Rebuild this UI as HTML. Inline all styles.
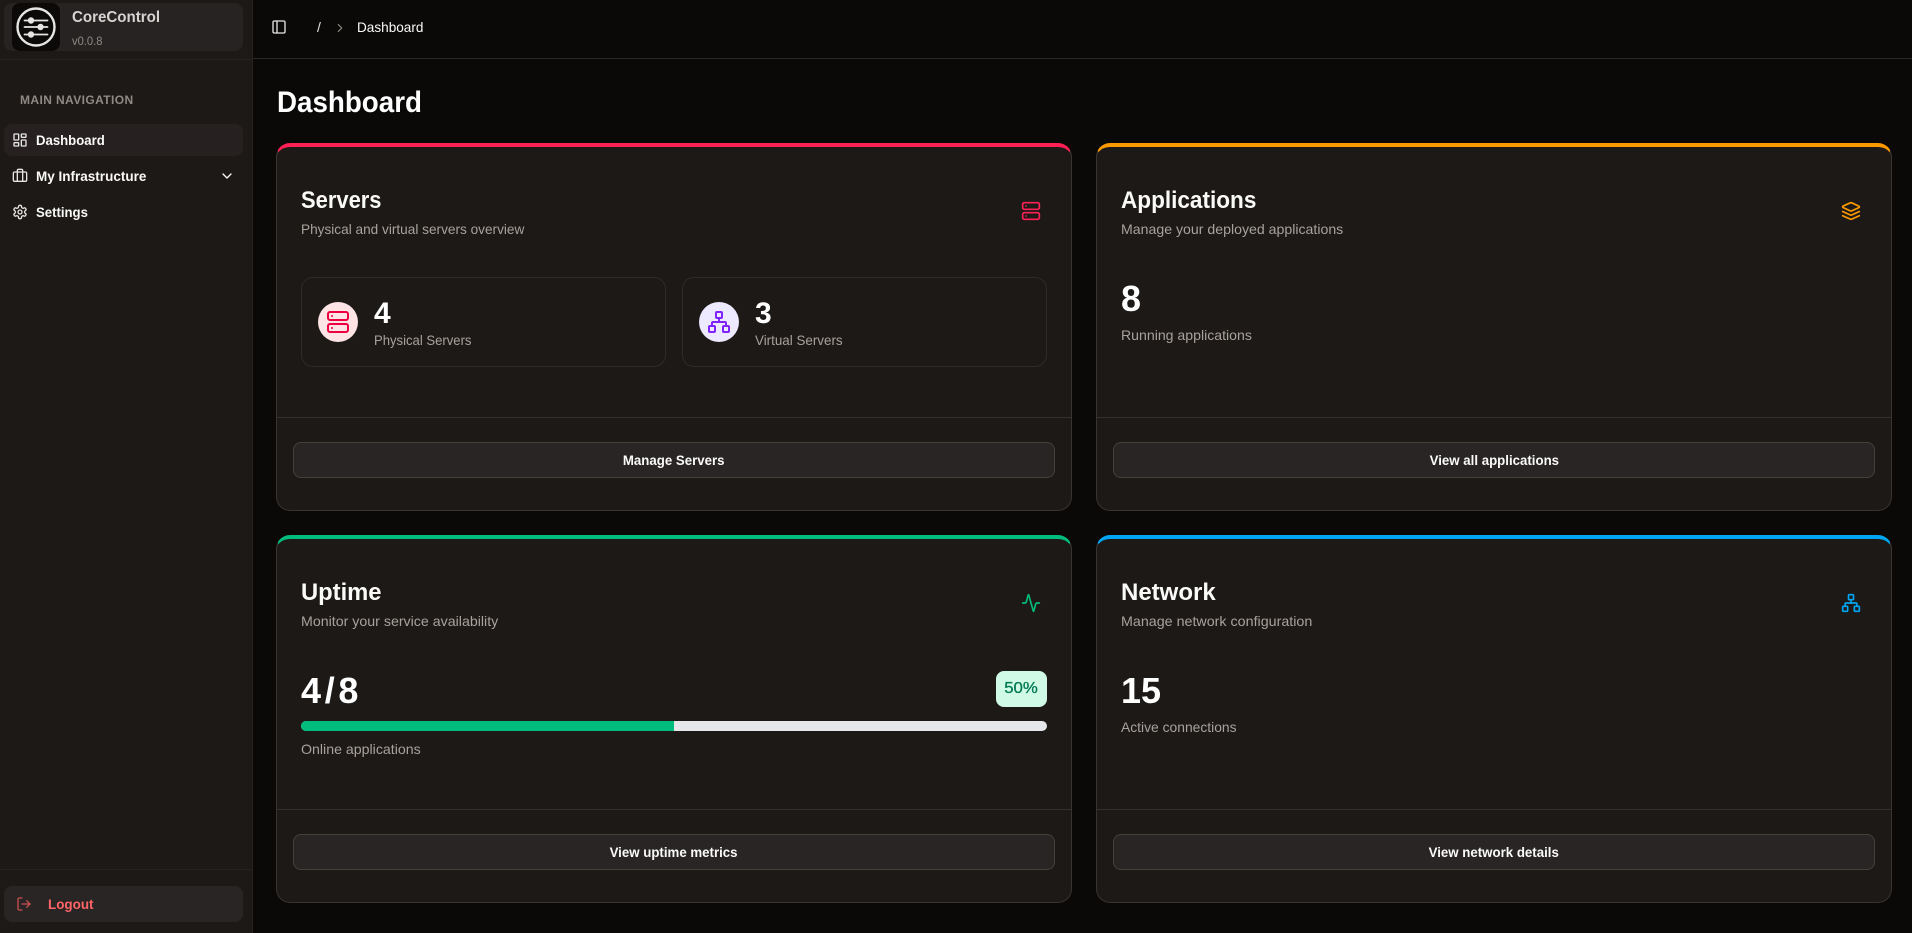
<!DOCTYPE html>
<html lang="en">
<head>
<meta charset="utf-8">
<title>CoreControl Dashboard</title>
<style>
*{box-sizing:border-box;margin:0;padding:0}
html,body{width:1912px;height:933px;overflow:hidden;background:#0a0908;font-family:"Liberation Sans",sans-serif;color:#fafaf9}
.t{position:absolute;white-space:nowrap;transform-origin:0 50%;line-height:20px;height:20px}
.b{font-weight:700}
svg{position:absolute;fill:none;stroke:currentColor;stroke-width:2;stroke-linecap:round;stroke-linejoin:round}
aside{position:absolute;left:0;top:0;width:253px;height:933px;background:#1c1917;border-right:1px solid #262220}
.line{position:absolute;height:1px}
.box{position:absolute}
header{position:absolute;left:253px;top:0;width:1659px;height:59px;border-bottom:1px solid #292524;background:#0a0908}
.card{position:absolute;width:796px;background:#1c1917;border:1px solid #383431;border-top-width:4px;border-radius:14px}
.btn{position:absolute;left:293px;width:762px;height:36px;background:#292524;border:1px solid #44403c;border-radius:8px;font-size:14px;font-weight:700;color:#fafaf9;text-align:center;line-height:34px}
.btn span{display:inline-block;transform:scaleX(.947)}
.stat{position:absolute;top:277px;height:90px;width:365px;border:1px solid #2e2b29;border-radius:12px}
.circle{position:absolute;width:40px;height:40px;border-radius:50%}
.sub{font-size:14px;color:#a8a29e}
.title{font-size:24px;font-weight:700;line-height:30px;height:30px}
.nav{font-size:14px;font-weight:700;color:#fafaf9}
</style>
</head>
<body>

<aside>
  <div class="box" style="left:4px;top:3px;width:239px;height:48px;background:#262322;border-radius:8px"></div>
  <div class="box" style="left:12px;top:3px;width:48px;height:48px;background:#0b0a09;border-radius:8px"></div>
  <svg style="left:12px;top:3px;color:#e7e5e4" width="48" height="48" viewBox="0 0 48 48">
    <circle cx="24" cy="24" r="18.5" stroke-width="2.4"/>
    <path d="M12.5 17.5h23M12.5 24h23M12.5 31.5h23" stroke-width="1.8"/>
    <circle cx="19" cy="17.5" r="3.2" fill="#e7e5e4" stroke="none"/>
    <circle cx="28.5" cy="24" r="3.2" fill="#e7e5e4" stroke="none"/>
    <circle cx="19" cy="31.5" r="3.2" fill="#e7e5e4" stroke="none"/>
  </svg>
  <div class="t b" style="left:72px;top:8px;font-size:16px;color:#d6d3d1;transform:scaleX(.943)">CoreControl</div>
  <div class="t" style="left:72px;top:31px;font-size:12px;color:#8f8a85;transform:scaleX(.93)">v0.0.8</div>
  <div class="line" style="left:0;top:59px;width:252px;background:#262220"></div>

  <div class="t b" style="left:20px;top:90px;font-size:12px;color:#8f8a85;letter-spacing:.4px">MAIN NAVIGATION</div>

  <div class="box" style="left:4px;top:124px;width:239px;height:32px;background:#262120;border-radius:8px"></div>
  <svg style="left:12px;top:132px;color:#e7e5e4" width="16" height="16" viewBox="0 0 24 24"><rect width="7" height="9" x="3" y="3" rx="1"/><rect width="7" height="5" x="14" y="3" rx="1"/><rect width="7" height="9" x="14" y="12" rx="1"/><rect width="7" height="5" x="3" y="16" rx="1"/></svg>
  <div class="t nav" style="left:36px;top:130px;transform:scaleX(.94)">Dashboard</div>

  <svg style="left:12px;top:168px;color:#e7e5e4" width="16" height="16" viewBox="0 0 24 24"><path d="M16 20V4a2 2 0 0 0-2-2h-4a2 2 0 0 0-2 2v16"/><rect width="20" height="14" x="2" y="6" rx="2"/></svg>
  <div class="t nav" style="left:36px;top:166px;transform:scaleX(.965)">My Infrastructure</div>
  <svg style="left:219px;top:168px;color:#fafaf9" width="16" height="16" viewBox="0 0 24 24"><path d="m6 9 6 6 6-6"/></svg>

  <svg style="left:12px;top:204px;color:#e7e5e4" width="16" height="16" viewBox="0 0 24 24"><path d="M12.22 2h-.44a2 2 0 0 0-2 2v.18a2 2 0 0 1-1 1.73l-.43.25a2 2 0 0 1-2 0l-.15-.08a2 2 0 0 0-2.73.73l-.22.38a2 2 0 0 0 .73 2.73l.15.1a2 2 0 0 1 1 1.72v.51a2 2 0 0 1-1 1.74l-.15.09a2 2 0 0 0-.73 2.73l.22.38a2 2 0 0 0 2.73.73l.15-.08a2 2 0 0 1 2 0l.43.25a2 2 0 0 1 1 1.73V20a2 2 0 0 0 2 2h.44a2 2 0 0 0 2-2v-.18a2 2 0 0 1 1-1.73l.43-.25a2 2 0 0 1 2 0l.15.08a2 2 0 0 0 2.73-.73l.22-.39a2 2 0 0 0-.73-2.73l-.15-.08a2 2 0 0 1-1-1.74v-.5a2 2 0 0 1 1-1.74l.15-.09a2 2 0 0 0 .73-2.73l-.22-.38a2 2 0 0 0-2.73-.73l-.15.08a2 2 0 0 1-2 0l-.43-.25a2 2 0 0 1-1-1.73V4a2 2 0 0 0-2-2z"/><circle cx="12" cy="12" r="3"/></svg>
  <div class="t nav" style="left:36px;top:202px;transform:scaleX(.94)">Settings</div>

  <div class="line" style="left:0;top:869px;width:252px;background:#262220"></div>
  <div class="box" style="left:4px;top:886px;width:239px;height:36px;background:#292524;border-radius:8px"></div>
  <svg style="left:16px;top:896px;color:#c9504f" width="16" height="16" viewBox="0 0 24 24"><path d="M9 21H5a2 2 0 0 1-2-2V5a2 2 0 0 1 2-2h4"/><polyline points="16 17 21 12 16 7"/><line x1="21" x2="9" y1="12" y2="12"/></svg>
  <div class="t b" style="left:48px;top:894px;font-size:14px;color:#ff6467;transform:scaleX(.96)">Logout</div>
</aside>

<header>
  <svg style="left:18px;top:19px;color:#e7e5e4" width="16" height="16" viewBox="0 0 24 24"><rect width="18" height="18" x="3" y="3" rx="2"/><path d="M9 3v18"/></svg>
  <div class="t" style="left:64px;top:17px;font-size:14px;color:#e7e5e4">/</div>
  <svg style="left:80px;top:21px;color:#8f8a85" width="14" height="14" viewBox="0 0 24 24"><path d="m9 18 6-6-6-6"/></svg>
  <div class="t" style="left:104px;top:17px;font-size:14px;color:#fafaf9;transform:scaleX(.97)">Dashboard</div>
</header>

<main>
  <h1 class="t b" style="left:277px;top:86px;font-size:30px;line-height:34px;height:34px;color:#fff;transform:scaleX(.925)">Dashboard</h1>

  <!-- Servers -->
  <div class="card" style="left:276px;top:143px;height:367.5px;border-top-color:#ff2056"></div>
  <div class="t title" style="left:301px;top:186px;transform:scaleX(.914)">Servers</div>
  <div class="t sub" style="left:301px;top:219px;transform:scaleX(.973)">Physical and virtual servers overview</div>
  <svg style="left:1021px;top:201px;color:#ff2056" width="20" height="20" viewBox="0 0 24 24"><rect width="20" height="8" x="2" y="2" rx="2" ry="2"/><rect width="20" height="8" x="2" y="14" rx="2" ry="2"/><line x1="6" x2="6.01" y1="6" y2="6"/><line x1="6" x2="6.01" y1="18" y2="18"/></svg>
  <div class="stat" style="left:301px"></div>
  <div class="circle" style="left:318px;top:302px;background:#ffe4e6"></div>
  <svg style="left:326px;top:310px;color:#ec003f" width="24" height="24" viewBox="0 0 24 24"><rect width="20" height="8" x="2" y="2" rx="2" ry="2"/><rect width="20" height="8" x="2" y="14" rx="2" ry="2"/><line x1="6" x2="6.01" y1="6" y2="6"/><line x1="6" x2="6.01" y1="18" y2="18"/></svg>
  <div class="t b" style="left:374px;top:299px;font-size:30px;line-height:30px;height:30px;color:#fff">4</div>
  <div class="t sub" style="left:374px;top:330px;transform:scaleX(.935)">Physical Servers</div>
  <div class="stat" style="left:682px"></div>
  <div class="circle" style="left:699px;top:302px;background:#ede9fe"></div>
  <svg style="left:707px;top:310px;color:#7f22fe" width="24" height="24" viewBox="0 0 24 24"><rect x="16" y="16" width="6" height="6" rx="1"/><rect x="2" y="16" width="6" height="6" rx="1"/><rect x="9" y="2" width="6" height="6" rx="1"/><path d="M5 16v-3a1 1 0 0 1 1-1h12a1 1 0 0 1 1 1v3"/><path d="M12 12V8"/></svg>
  <div class="t b" style="left:755px;top:299px;font-size:30px;line-height:30px;height:30px;color:#fff">3</div>
  <div class="t sub" style="left:755px;top:330px;transform:scaleX(.957)">Virtual Servers</div>
  <div class="line" style="left:277px;top:417px;width:794px;background:#33302e"></div>
  <div class="btn" style="top:442px"><span>Manage Servers</span></div>

  <!-- Applications -->
  <div class="card" style="left:1096px;top:143px;height:367.5px;border-top-color:#fe9a00"></div>
  <div class="t title" style="left:1121px;top:186px;transform:scaleX(.94)">Applications</div>
  <div class="t sub" style="left:1121px;top:219px;transform:scaleX(1.009)">Manage your deployed applications</div>
  <svg style="left:1841px;top:201px;color:#fe9a00" width="20" height="20" viewBox="0 0 24 24"><path d="m12.83 2.18a2 2 0 0 0-1.66 0L2.6 6.08a1 1 0 0 0 0 1.83l8.58 3.91a2 2 0 0 0 1.66 0l8.58-3.9a1 1 0 0 0 0-1.83Z"/><path d="m22 17.65-9.17 4.16a2 2 0 0 1-1.66 0L2 17.65"/><path d="m22 12.65-9.17 4.16a2 2 0 0 1-1.66 0L2 12.65"/></svg>
  <div class="t b" style="left:1121px;top:280px;font-size:36px;line-height:38px;height:38px;color:#fff">8</div>
  <div class="t sub" style="left:1121px;top:325px;transform:scaleX(1.007)">Running applications</div>
  <div class="line" style="left:1097px;top:417px;width:794px;background:#33302e"></div>
  <div class="btn" style="top:442px;left:1113px;width:762px"><span>View all applications</span></div>

  <!-- Uptime -->
  <div class="card" style="left:276px;top:535px;height:367.5px;border-top-color:#00bc7d"></div>
  <div class="t title" style="left:301px;top:578px;transform:scaleX(.99)">Uptime</div>
  <div class="t sub" style="left:301px;top:611px;transform:scaleX(1.014)">Monitor your service availability</div>
  <svg style="left:1021px;top:593px;color:#00bc7d" width="20" height="20" viewBox="0 0 24 24"><path d="M22 12h-2.48a2 2 0 0 0-1.93 1.46l-2.35 8.36a.25.25 0 0 1-.48 0L9.24 2.18a.25.25 0 0 0-.48 0l-2.35 8.36A2 2 0 0 1 4.49 12H2"/></svg>
  <div class="t b" style="left:301px;top:672px;font-size:36px;line-height:38px;height:38px;color:#fff;letter-spacing:3.7px">4/8</div>
  <div class="box" style="left:996px;top:671px;width:51px;height:36px;background:#d0fae5;border-radius:8px;color:#007a55;font-size:16px;line-height:36px;text-align:center;-webkit-text-stroke:.3px #007a55"><span style="display:inline-block;transform:scaleX(1.05)">50%</span></div>
  <div class="box" style="left:301px;top:721px;width:746px;height:10px;background:#e5e7eb;border-radius:5px;overflow:hidden"><div style="width:50%;height:10px;background:#00bc7d"></div></div>
  <div class="t sub" style="left:301px;top:739px;transform:scaleX(1.012)">Online applications</div>
  <div class="line" style="left:277px;top:809px;width:794px;background:#33302e"></div>
  <div class="btn" style="top:834px"><span>View uptime metrics</span></div>

  <!-- Network -->
  <div class="card" style="left:1096px;top:535px;height:367.5px;border-top-color:#00a6f4"></div>
  <div class="t title" style="left:1121px;top:578px;transform:scaleX(1)">Network</div>
  <div class="t sub" style="left:1121px;top:611px;transform:scaleX(1.02)">Manage network configuration</div>
  <svg style="left:1841px;top:593px;color:#00a6f4" width="20" height="20" viewBox="0 0 24 24"><rect x="16" y="16" width="6" height="6" rx="1"/><rect x="2" y="16" width="6" height="6" rx="1"/><rect x="9" y="2" width="6" height="6" rx="1"/><path d="M5 16v-3a1 1 0 0 1 1-1h12a1 1 0 0 1 1 1v3"/><path d="M12 12V8"/></svg>
  <div class="t b" style="left:1121px;top:672px;font-size:36px;line-height:38px;height:38px;color:#fff">15</div>
  <div class="t sub" style="left:1121px;top:717px;transform:scaleX(.99)">Active connections</div>
  <div class="line" style="left:1097px;top:809px;width:794px;background:#33302e"></div>
  <div class="btn" style="top:834px;left:1113px;width:762px"><span>View network details</span></div>
</main>

</body>
</html>
